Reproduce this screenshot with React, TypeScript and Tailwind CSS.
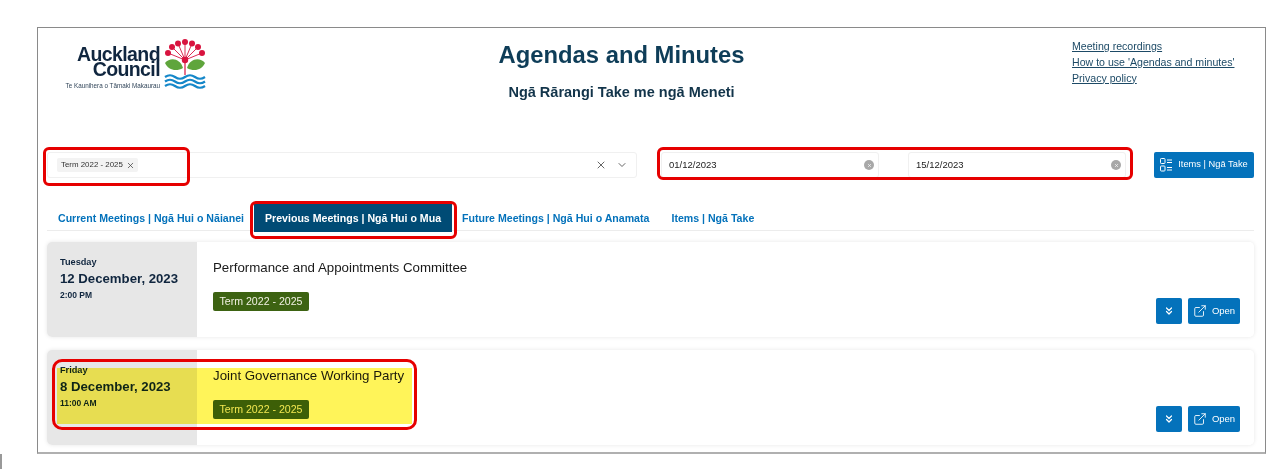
import React from "react";
import { X, ChevronDown, ChevronsDown, ExternalLink } from "lucide-react";

function Logo() {
  const buds: [number, number][] = [
    [168, 53],[172, 47],[178, 43.5],[185, 42],[192, 43.5],[198, 47],[202, 53],
  ];
  return (
    <div className="flex items-start w-[141px] h-[52px]">
      <div className="w-[94px] flex flex-col items-end pt-[9px]">
        <div className="text-[19.5px] leading-[15px] font-bold text-[#10263f] tracking-[-0.6px]">Auckland</div>
        <div className="text-[19.5px] leading-[15px] font-bold text-[#10263f] tracking-[-0.6px]">Council</div>
        <div className="text-[6.3px] leading-[8px] mt-[5px] text-[#33475b] whitespace-nowrap">Te Kaunihera o Tāmaki Makaurau</div>
      </div>
      <svg width="44" height="52" viewBox="163 38 44 52" className="ml-[3px] shrink-0">
        {buds.map(([x, y], i) => (
          <line key={i} x1="185" y1="60" x2={x} y2={y} stroke="#d8143f" strokeWidth="0.9" />
        ))}
        {buds.map(([x, y], i) => (
          <circle key={i} cx={x} cy={y} r={3} fill="#d8143f" />
        ))}
        <circle cx="185" cy="60" r="3.2" fill="#d8143f" />
        <line x1="185" y1="60" x2="185" y2="75" stroke="#d8143f" strokeWidth="1.2" />
        <path d="M165 63c5-6 15-5 18 5-7 4-15 2-18-5z" fill="#5fa53c" />
        <path d="M205 63c-5-6-15-5-18 5 7 4 15 2 18-5z" fill="#5fa53c" />
        {[77, 81.5, 86].map((y) => (
          <path key={y} d={`M165 ${y}q5-3.5 10 0t10 0 10 0 10 0`} fill="none" stroke="#1587c9" strokeWidth="2.2" />
        ))}
      </svg>
    </div>
  );
}

function ItemsIcon() {
  return (
    <svg width="12" height="14" viewBox="0 0 12 14" fill="none" stroke="#fff" strokeWidth="1">
      <rect x="0.5" y="0.5" width="4.5" height="5" rx="0.8" />
      <rect x="0.5" y="8" width="4.5" height="5" rx="0.8" />
      <path d="M7 2h5M7 4.5h5M7 9.5h5M7 12h5" />
    </svg>
  );
}

function DateField({ value }: { value: string }) {
  return (
    <div className="w-[218px] h-[26px] border border-[#f0f0f0] rounded-[3px] flex items-center justify-between pl-[7px] pr-[4px] text-[9.5px] text-[#222]">
      <span>{value}</span>
      <span className="w-[10px] h-[10px] rounded-full bg-[#a8a8a8] flex items-center justify-center">
        <X size={5} color="#fff" strokeWidth={3} />
      </span>
    </div>
  );
}

function Card({ day, date, time, title, last }: { day: string; date: string; time: string; title: string; last?: boolean }) {
  return (
    <div className={`flex h-[95px] rounded-[5px] shadow-[0_0_4px_rgba(0,0,0,0.1)] overflow-hidden ${last ? "" : "mb-[13px]"}`}>
      <div className="w-[150px] bg-[#e7e7e7] pl-[13px] pt-[14px] text-[#10263f]">
        <div className="text-[9.2px] leading-[12px] font-bold">{day}</div>
        <div className="text-[13.2px] leading-[19px] font-bold mt-[1px]">{date}</div>
        <div className="text-[8.5px] leading-[11px] font-bold mt-[2px]">{time}</div>
      </div>
      <div className="flex-1 relative pl-[16px] pt-[17px] bg-white flex justify-between">
        <div>
          <div className="text-[13.3px] leading-[17px] text-[#1a1a1a]">{title}</div>
          <div className="mt-[16px] w-[96px] h-[19px] bg-[#3d6312] rounded-[2px] text-[#f2f2e4] text-[10.6px] flex items-center justify-center">Term 2022 - 2025</div>
        </div>
        <div className="flex gap-[6px] items-end pr-[14px] pb-[13px]">
          <button className="w-[26px] h-[26px] bg-[#0472bb] rounded-[2px] flex items-center justify-center">
            <ChevronsDown size={12} color="#fff" strokeWidth={2.4} />
          </button>
          <button className="w-[52px] h-[26px] bg-[#0472bb] rounded-[2px] flex items-center justify-center gap-[5px] text-white text-[9.5px]">
            <ExternalLink size={14} color="#fff" strokeWidth={1.5} />
            Open
          </button>
        </div>
      </div>
    </div>
  );
}

export default function App() {
  return (
    <div className="relative w-[1278px] h-[469px] bg-white overflow-hidden pt-[27px] pl-[37px] font-['Liberation_Sans',Arial,sans-serif]">
      <div className="w-[1229px] h-[427px] border border-[#8a8a8a] border-b-2 border-b-[#b0b0b0] relative pt-[10px] px-[9px]">
        {/* Header */}
        <div className="flex h-[114px]">
          <div className="w-[160px] pl-[19px] shrink-0">
            <Logo />
          </div>
          <div className="flex-1 flex flex-col items-center pt-[3px]">
            <div className="text-[23.8px] leading-[28px] font-bold text-[#0e3d58] ml-[-36px]">Agendas and Minutes</div>
            <div className="text-[14.5px] leading-[16px] font-bold text-[#12344a] mt-[15px] ml-[-36px]">Ngā Rārangi Take me ngā Meneti</div>
          </div>
          <div className="w-[184px] pt-[1px] text-[10.6px] leading-[15.8px] text-[#1d4a66] underline flex flex-col items-start shrink-0">
            <span>Meeting recordings</span>
            <span>How to use 'Agendas and minutes'</span>
            <span>Privacy policy</span>
          </div>
        </div>

        {/* Filters */}
        <div className="flex items-center">
          <div className="w-[590px] h-[26px] border border-[#f0f0f0] rounded-[3px] flex items-center justify-between pl-[9px] pr-[8px]">
            <div className="h-[14px] w-[81px] bg-[#f3f3f3] rounded-[2px] pl-[4px] flex items-center gap-[3px] text-[7.9px] text-[#333] whitespace-nowrap">
              Term 2022 - 2025 <X size={9} color="#444" />
            </div>
            <div className="flex items-center gap-[9px]">
              <X size={12} color="#666" />
              <ChevronDown size={12} color="#666" />
            </div>
          </div>
          <div className="flex ml-[24px] w-[465px] justify-between">
            <DateField value="01/12/2023" />
            <DateField value="15/12/2023" />
          </div>
          <button className="ml-[28px] w-[100px] h-[26px] bg-[#0472bb] rounded-[2px] flex items-center justify-center gap-[6px] text-white text-[9.3px] whitespace-nowrap">
            <ItemsIcon />
            Items | Ngā Take
          </button>
        </div>

        {/* Tabs */}
        <div className="flex items-start h-[27px] mt-[26px] border-b border-[#ececec] text-[10.6px] font-bold text-[#0472bb] pl-[11px] mr-[2px]">
          <span className="mt-[7px]">Current Meetings | Ngā Hui o Nāianei</span>
          <span className="ml-[10px] w-[198px] h-[28px] pt-[1px] bg-[#004b75] text-white flex items-center justify-center">Previous Meetings | Ngā Hui o Mua</span>
          <span className="ml-[10px] mt-[7px]">Future Meetings | Ngā Hui o Anamata</span>
          <span className="ml-[22px] mt-[7px]">Items | Ngā Take</span>
        </div>

        {/* Cards */}
        <div className="mt-[11px] mr-[2px]">
          <Card day="Tuesday" date="12 December, 2023" time="2:00 PM" title="Performance and Appointments Committee" />
          <Card day="Friday" date="8 December, 2023" time="11:00 AM" title="Joint Governance Working Party" last />
        </div>
      </div>

      {/* Annotations drawn over the screenshot */}
      <div className="absolute left-[57px] top-[368px] w-[355px] h-[56px] bg-[#ffee00]/65 mix-blend-multiply" />
      <div className="absolute left-[43px] top-[147px] w-[147px] h-[39px] border-[3px] border-[#e60000] rounded-[6px]" />
      <div className="absolute left-[657px] top-[147px] w-[476px] h-[33px] border-[3px] border-[#e60000] rounded-[6px]" />
      <div className="absolute left-[250px] top-[201px] w-[207px] h-[38px] border-[3px] border-[#e60000] rounded-[6px]" />
      <div className="absolute left-[52px] top-[359px] w-[365px] h-[71px] border-[3px] border-[#e60000] rounded-[10px]" />
      <div className="absolute left-0 top-[454px] w-[2px] h-[15px] bg-[#999]" />
    </div>
  );
}
